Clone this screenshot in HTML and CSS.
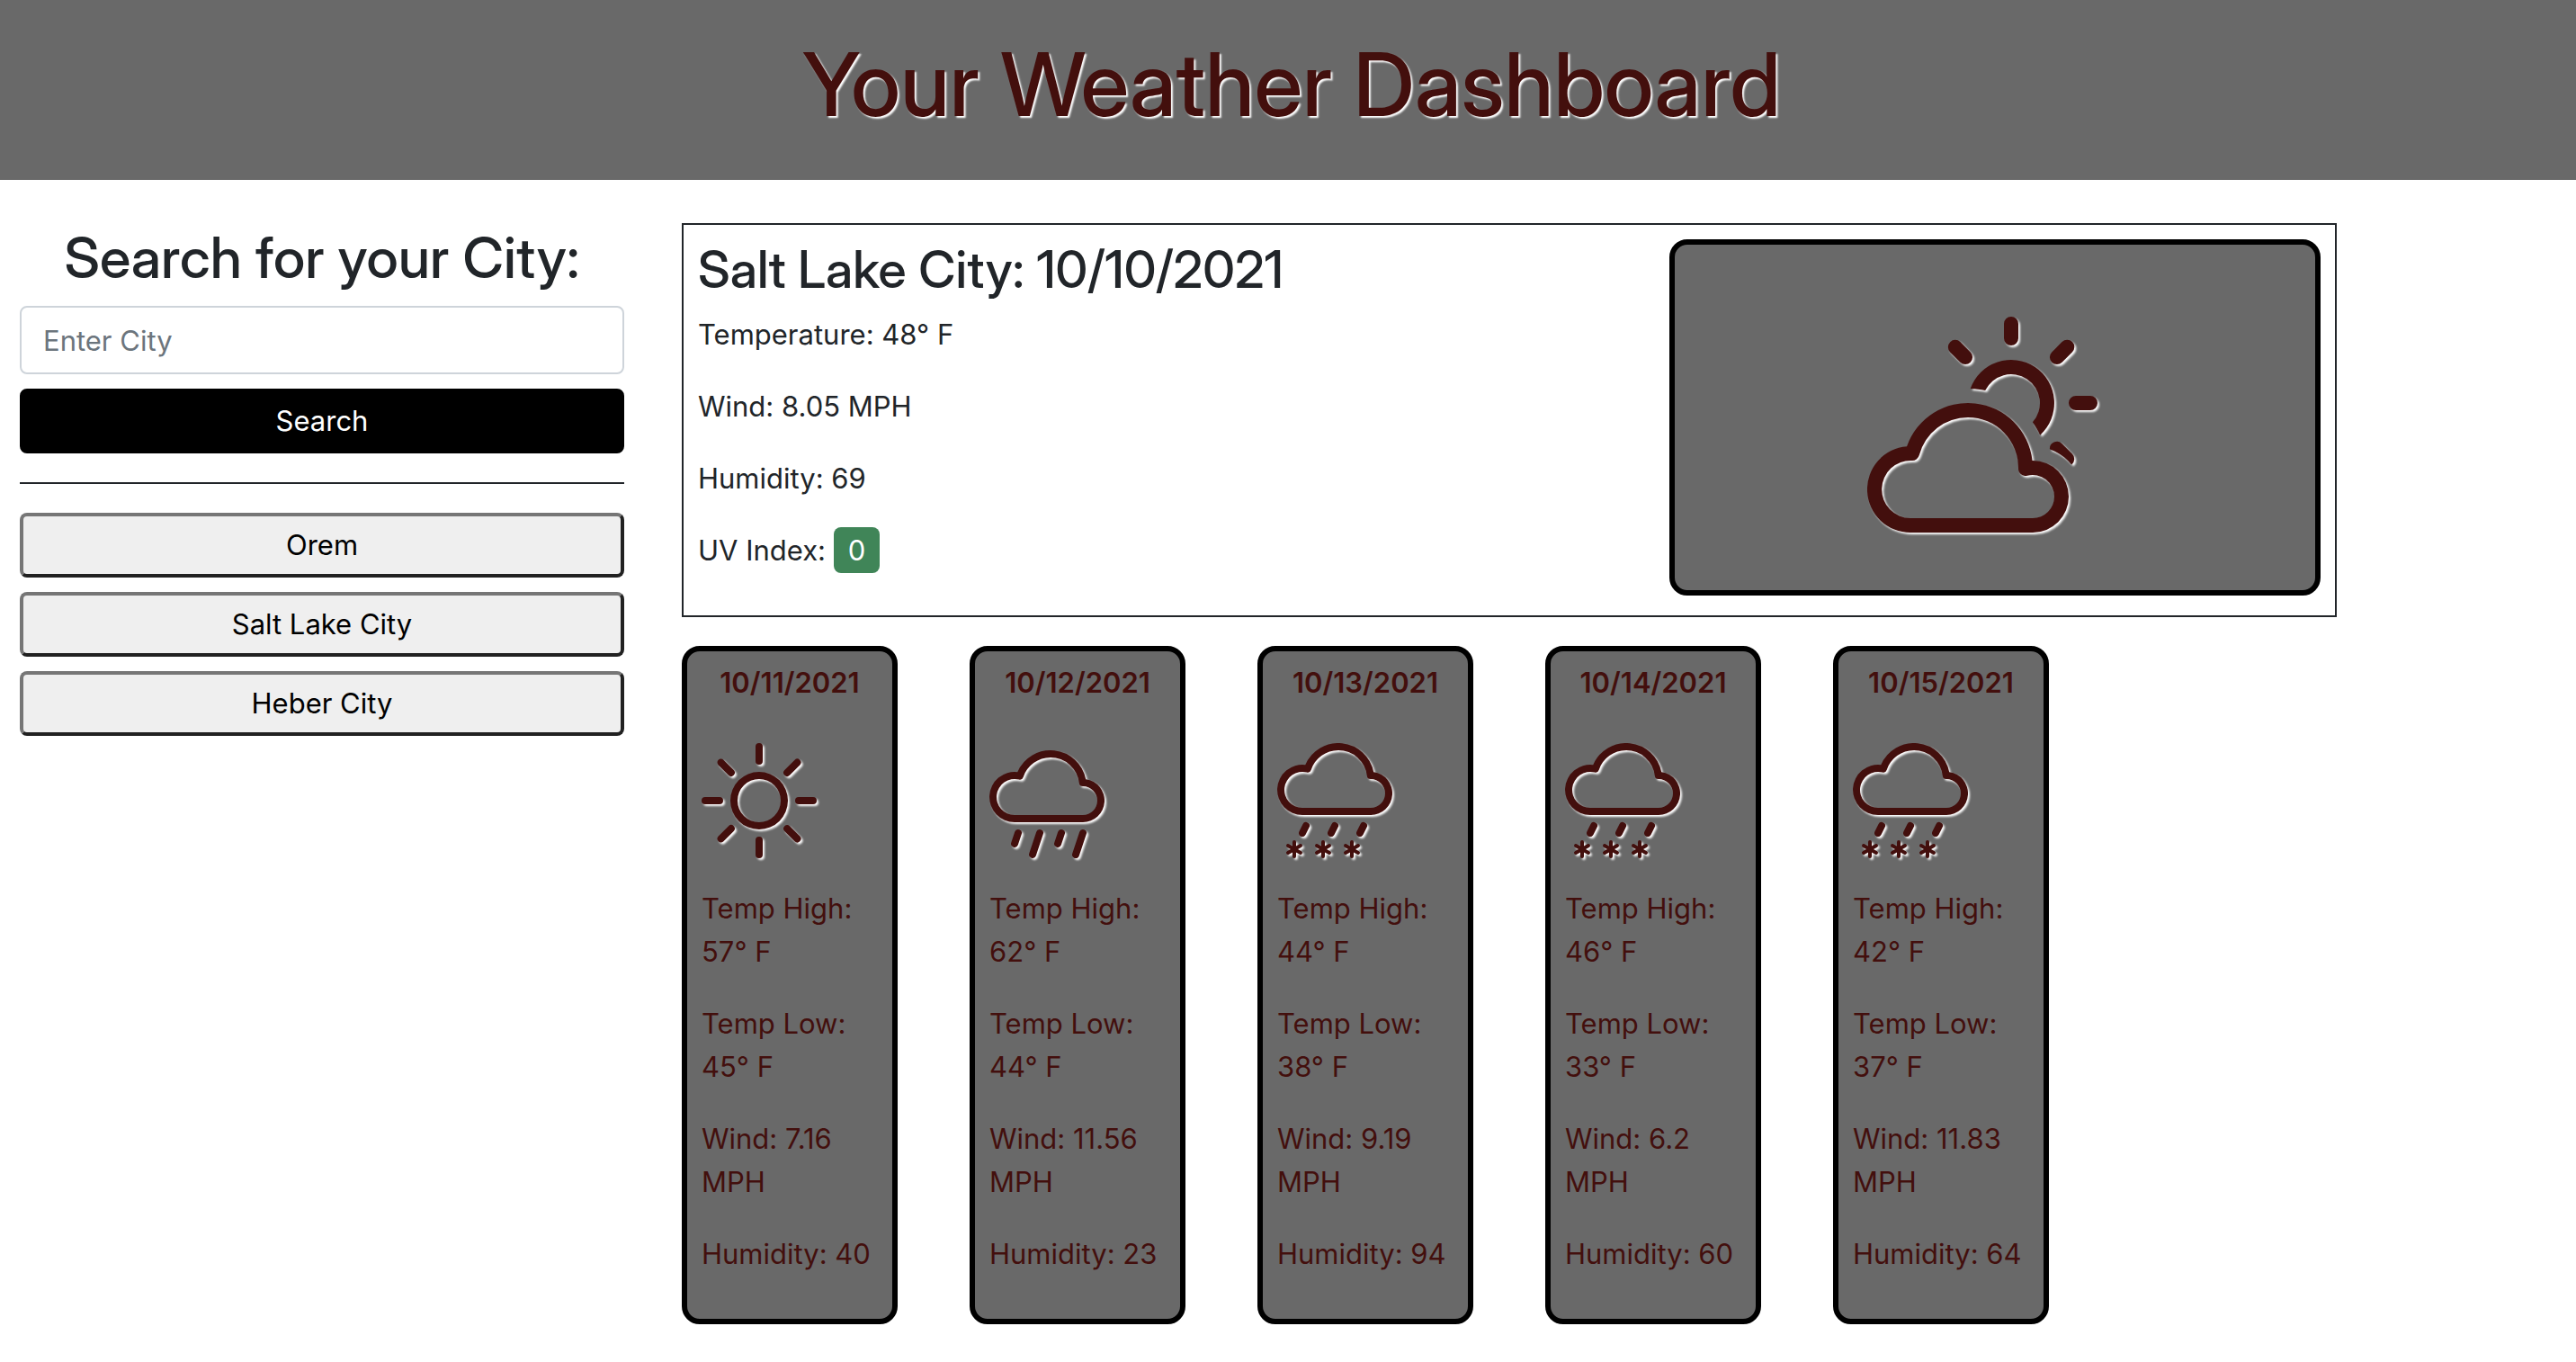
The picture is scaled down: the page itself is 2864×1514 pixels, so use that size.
FILE: index.html
```html
<!DOCTYPE html>
<html lang="en">
<head>
<meta charset="utf-8">
<meta name="viewport" content="width=device-width, initial-scale=1">
<title>Your Weather Dashboard</title>
<link rel="stylesheet" href="styles.css">
</head>
<body>
<svg class="sprite" aria-hidden="true">
  <symbol id="cloud-sun" viewBox="0 0 16 16">
    <path d="M7 8a3.5 3.5 0 0 1 3.5 3.555.5.5 0 0 0 .624.492A1.503 1.503 0 0 1 13 13.5a1.5 1.5 0 0 1-1.5 1.5H3a2 2 0 1 1 .1-3.998.5.5 0 0 0 .51-.375A3.502 3.502 0 0 1 7 8zm4.473 3a4.5 4.5 0 0 0-8.72-.99A3 3 0 0 0 3 16h8.5a2.5 2.5 0 0 0 0-5h-.027z"/>
    <path d="M10.5 1.5a.5.5 0 0 0-1 0v1a.5.5 0 0 0 1 0v-1zm3.743 1.964a.5.5 0 1 0-.707-.707l-.708.707a.5.5 0 0 0 .708.708l.707-.708zm-7.779-.707a.5.5 0 0 0-.707.707l.707.708a.5.5 0 1 0 .708-.708l-.708-.707zm1.734 3.374a2 2 0 1 1 3.296 2.198c.199.281.372.582.516.898a3 3 0 1 0-4.84-3.225c.352.011.696.055 1.028.129zm4.484 4.074c.6.215 1.125.59 1.522 1.072a.5.5 0 0 0 .039-.742l-.707-.707a.5.5 0 0 0-.854.377zM14.5 6.5a.5.5 0 0 0 0 1h1a.5.5 0 0 0 0-1h-1z"/>
  </symbol>
  <symbol id="sun" viewBox="0 0 16 16">
    <path d="M8 11a3 3 0 1 1 0-6 3 3 0 0 1 0 6zm0 1a4 4 0 1 0 0-8 4 4 0 0 0 0 8zM8 0a.5.5 0 0 1 .5.5v2a.5.5 0 0 1-1 0v-2A.5.5 0 0 1 8 0zm0 13a.5.5 0 0 1 .5.5v2a.5.5 0 0 1-1 0v-2A.5.5 0 0 1 8 13zm8-5a.5.5 0 0 1-.5.5h-2a.5.5 0 0 1 0-1h2a.5.5 0 0 1 .5.5zM3 8a.5.5 0 0 1-.5.5h-2a.5.5 0 0 1 0-1h2A.5.5 0 0 1 3 8zm10.657-5.657a.5.5 0 0 1 0 .707l-1.414 1.415a.5.5 0 1 1-.707-.708l1.414-1.414a.5.5 0 0 1 .707 0zm-9.193 9.193a.5.5 0 0 1 0 .707L3.05 13.657a.5.5 0 0 1-.707-.707l1.414-1.414a.5.5 0 0 1 .707 0zm9.193 2.121a.5.5 0 0 1-.707 0l-1.414-1.414a.5.5 0 0 1 .707-.707l1.414 1.414a.5.5 0 0 1 0 .707zM4.464 4.465a.5.5 0 0 1-.707 0L2.343 3.05a.5.5 0 1 1 .707-.707l1.414 1.414a.5.5 0 0 1 0 .708z"/>
  </symbol>
  <symbol id="cloud-rain" viewBox="0 0 16 16">
    <path d="M4.158 12.025a.5.5 0 0 1 .316.633l-.5 1.5a.5.5 0 0 1-.948-.316l.5-1.5a.5.5 0 0 1 .632-.317zm3 0a.5.5 0 0 1 .316.633l-1 3a.5.5 0 0 1-.948-.316l1-3a.5.5 0 0 1 .632-.317zm3 0a.5.5 0 0 1 .316.633l-.5 1.5a.5.5 0 0 1-.948-.316l.5-1.5a.5.5 0 0 1 .632-.317zm3 0a.5.5 0 0 1 .316.633l-1 3a.5.5 0 1 1-.948-.316l1-3a.5.5 0 0 1 .632-.317zm.247-6.998a5.001 5.001 0 0 0-9.499-1.004A3.5 3.5 0 1 0 3.5 11H13a3 3 0 0 0 .405-5.973zM8.5 2a4 4 0 0 1 3.976 3.555.5.5 0 0 0 .5.445H13a2 2 0 0 1 0 4H3.5a2.5 2.5 0 1 1 .605-4.926.5.5 0 0 0 .596-.329A4.002 4.002 0 0 1 8.5 2z"/>
  </symbol>
  <symbol id="cloud-sleet" viewBox="0 0 16 16">
    <path d="M13.405 4.027a5.001 5.001 0 0 0-9.499-1.004A3.5 3.5 0 1 0 3.5 10H13a3 3 0 0 0 .405-5.973zM8.5 1a4 4 0 0 1 3.976 3.555.5.5 0 0 0 .5.445H13a2 2 0 0 1 0 4H3.5a2.5 2.5 0 1 1 .605-4.926.5.5 0 0 0 .596-.329A4.002 4.002 0 0 1 8.5 1z"/>
    <path d="M2.375 13.5a.25.25 0 0 1 .25.25v.57l.501-.287a.25.25 0 0 1 .248.434l-.495.283.495.283a.25.25 0 0 1-.248.434l-.501-.286v.569a.25.25 0 1 1-.5 0v-.57l-.501.287a.25.25 0 0 1-.248-.434l.495-.283-.495-.283a.25.25 0 0 1 .248-.434l.501.286v-.569a.25.25 0 0 1 .25-.25zm1.849-2.447a.5.5 0 0 1 .223.67l-.5 1a.5.5 0 1 1-.894-.447l.5-1a.5.5 0 0 1 .67-.223z"/>
    <path d="M6.375 13.5a.25.25 0 0 1 .25.25v.57l.501-.287a.25.25 0 0 1 .248.434l-.495.283.495.283a.25.25 0 0 1-.248.434l-.501-.286v.569a.25.25 0 1 1-.5 0v-.57l-.501.287a.25.25 0 0 1-.248-.434l.495-.283-.495-.283a.25.25 0 0 1 .248-.434l.501.286v-.569a.25.25 0 0 1 .25-.25zm1.849-2.447a.5.5 0 0 1 .223.67l-.5 1a.5.5 0 1 1-.894-.447l.5-1a.5.5 0 0 1 .67-.223z"/>
    <path d="M10.375 13.5a.25.25 0 0 1 .25.25v.57l.501-.287a.25.25 0 0 1 .248.434l-.495.283.495.283a.25.25 0 0 1-.248.434l-.501-.286v.569a.25.25 0 1 1-.5 0v-.57l-.501.287a.25.25 0 0 1-.248-.434l.495-.283-.495-.283a.25.25 0 0 1 .248-.434l.501.286v-.569a.25.25 0 0 1 .25-.25zm1.849-2.447a.5.5 0 0 1 .223.67l-.5 1a.5.5 0 1 1-.894-.447l.5-1a.5.5 0 0 1 .67-.223z"/>
  </symbol>
</svg>

<header class="banner">
  <h1 class="banner-title">Your Weather Dashboard</h1>
</header>

<div class="layout">
  <aside class="sidebar">
    <form class="search">
      <h2 class="search-title"><label for="city">Search for your City:</label></h2>
      <input class="search-input" id="city" type="text" placeholder="Enter City">
      <button class="search-button" type="button">Search</button>
    </form>
    <hr class="divider">
    <div class="history">
      <button class="history-button" type="button">Orem</button>
      <button class="history-button" type="button">Salt Lake City</button>
      <button class="history-button" type="button">Heber City</button>
    </div>
  </aside>

  <main class="weather">
    <section class="current">
      <div class="current-details">
        <h3 class="current-title">Salt Lake City: 10/10/2021</h3>
        <p>Temperature: 48° F</p>
        <p>Wind: 8.05 MPH</p>
        <p>Humidity: 69</p>
        <p>UV Index: <span class="uv">0</span></p>
      </div>
      <div class="tile current-icon">
        <svg class="icon icon-large" role="img" aria-label="Partly cloudy"><use href="#cloud-sun"/></svg>
      </div>
    </section>

    <section class="forecast">
      <article class="tile day">
        <h4 class="day-date">10/11/2021</h4>
        <svg class="icon" role="img" aria-label="Sunny"><use href="#sun"/></svg>
        <p>Temp High: 57° F</p>
        <p>Temp Low: 45° F</p>
        <p>Wind: 7.16 MPH</p>
        <p>Humidity: 40</p>
      </article>
      <article class="tile day">
        <h4 class="day-date">10/12/2021</h4>
        <svg class="icon" role="img" aria-label="Rain"><use href="#cloud-rain"/></svg>
        <p>Temp High: 62° F</p>
        <p>Temp Low: 44° F</p>
        <p>Wind: 11.56 MPH</p>
        <p>Humidity: 23</p>
      </article>
      <article class="tile day">
        <h4 class="day-date">10/13/2021</h4>
        <svg class="icon" role="img" aria-label="Sleet"><use href="#cloud-sleet"/></svg>
        <p>Temp High: 44° F</p>
        <p>Temp Low: 38° F</p>
        <p>Wind: 9.19 MPH</p>
        <p>Humidity: 94</p>
      </article>
      <article class="tile day">
        <h4 class="day-date">10/14/2021</h4>
        <svg class="icon" role="img" aria-label="Sleet"><use href="#cloud-sleet"/></svg>
        <p>Temp High: 46° F</p>
        <p>Temp Low: 33° F</p>
        <p>Wind: 6.2 MPH</p>
        <p>Humidity: 60</p>
      </article>
      <article class="tile day">
        <h4 class="day-date">10/15/2021</h4>
        <svg class="icon" role="img" aria-label="Sleet"><use href="#cloud-sleet"/></svg>
        <p>Temp High: 42° F</p>
        <p>Temp Low: 37° F</p>
        <p>Wind: 11.83 MPH</p>
        <p>Humidity: 64</p>
      </article>
    </section>
  </main>
</div>
</body>
</html>
```
FILE: styles.css
```css
*,
*::before,
*::after {
  box-sizing: border-box;
}

body {
  margin: 0;
  background: #fff;
  color: #212529;
  font-family: Inter, "Liberation Sans", sans-serif;
  font-size: 31px;
  line-height: 48px;
}

h1, h2, h3, h4 {
  margin: 0;
  font-weight: 500;
}

h1, h2, h3 {
  font-family: "Inter Display", Inter, "Liberation Sans", sans-serif;
}

p {
  margin: 0 0 32px;
}

.sprite {
  display: none;
}

/* Banner */
.banner {
  padding: 38px 16px 50px 24px;
  background: #696969;
  text-align: center;
}

.banner-title {
  color: #430f0d;
  font-size: 98px;
  line-height: 112px;
  text-shadow: 2px 2px 2px #fff;
}

/* Page columns */
.layout {
  display: flex;
  align-items: flex-start;
}

.sidebar {
  flex: 0 0 25%;
  padding: 48px 22px;
}

.weather {
  flex: 1;
  min-width: 0;
  padding: 48px 266px 40px 42px;
}

/* Search */
.search {
  display: flex;
  flex-direction: column;
  gap: 16px;
}

.search-title {
  font-size: 63px;
  line-height: 76px;
  text-align: center;
}

.search-input,
.search-button,
.history-button {
  width: 100%;
  border-radius: 8px;
  font: inherit;
}

.search-input {
  height: 76px;
  padding: 12px 24px;
  border: 2px solid #ced4da;
  background: #fff;
  color: #212529;
}

.search-input::placeholder {
  color: #6c757d;
  opacity: 1;
}

.search-button,
.history-button {
  height: 72px;
  padding: 8px 12px;
}

.search-button {
  border: 4px solid #000;
  background: #000;
  color: #fff;
}

.divider {
  height: 2px;
  margin: 32px 0;
  border: 0;
  background: #212529;
}

.history {
  display: flex;
  flex-direction: column;
  gap: 16px;
}

.history-button {
  border: 4px solid;
  border-color: #767676 #212121 #212121 #767676;
  background: #efefef;
  color: #000;
}

/* Weather */
.tile {
  border: 6px solid #000;
  border-radius: 20px;
  background: #696969;
  color: #430f0d;
}

.icon {
  display: block;
  width: 128px;
  height: 128px;
  fill: currentColor;
  filter: drop-shadow(2px 2px 1px #fff);
}

.icon-large {
  width: 256px;
  height: 256px;
}

.current {
  display: grid;
  grid-template-columns: minmax(0, 1fr) 724px;
  align-items: start;
  padding: 16px;
  border: 2px solid #212529;
}

.current-title {
  margin-bottom: 14px;
  font-size: 57px;
  line-height: 68px;
}

.uv {
  padding: 7px 16px;
  border-radius: 8px;
  background: #408558;
  color: #fff;
}

.current-icon {
  display: flex;
  justify-content: center;
  padding: 64px 28px 64px 0;
}

.forecast {
  display: grid;
  grid-template-columns: repeat(5, 240px);
  gap: 80px;
  margin-top: 32px;
}

.day {
  padding: 16px;
}

.day .icon {
  margin: 48px 0 32px;
}

.day-date {
  font-size: 31px;
  line-height: 38px;
  font-weight: 600;
  text-align: center;
}
```
